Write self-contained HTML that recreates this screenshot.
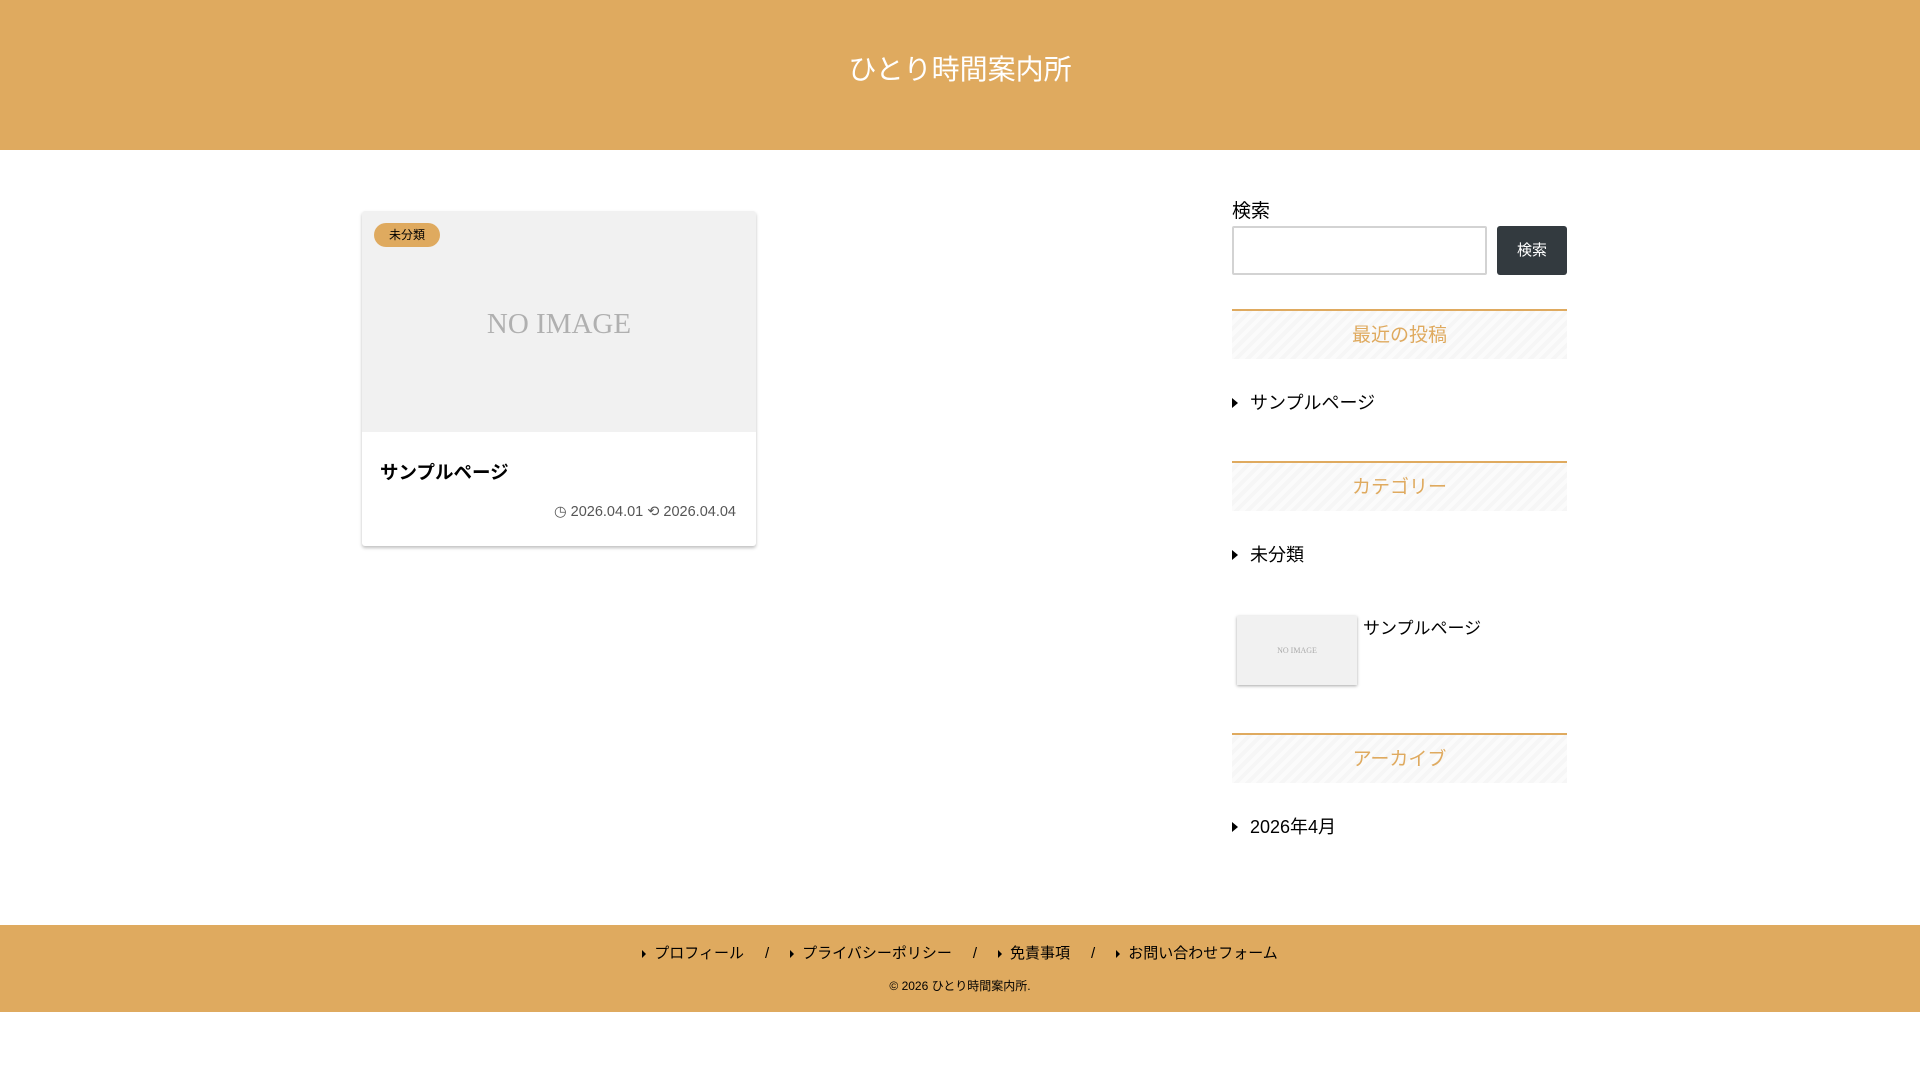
<!DOCTYPE html>
<html><head><meta charset="utf-8"><style>
*{box-sizing:border-box;margin:0;padding:0}
body{width:1920px;height:1080px;background:#fff;font-family:"Liberation Sans","Noto Sans CJK JP",sans-serif;color:#000;position:relative;overflow:hidden}
.hd{position:absolute;left:0;top:0;width:1920px;height:150px;background:#dfaa5f;color:#fff;font-size:28px;text-align:center;line-height:140px}
.card{position:absolute;left:362px;top:211px;width:394px;height:335px;background:#fff;box-shadow:0 2px 3px rgba(0,0,0,.25);border-radius:3px;overflow:hidden}
.img{height:221px;background:#f1f1f1;text-align:center;line-height:226px;font-family:"Liberation Serif",serif;font-size:29px;color:#b0b0b0}
.badge{position:absolute;left:12px;top:12px;width:66px;height:24px;border-radius:12px;background:#dfaa5f;font-size:12px;text-align:center;line-height:24px}
.ttl{position:absolute;left:18px;top:248px;font-size:18.5px;font-weight:bold}
.dt{position:absolute;right:20px;top:293px;font-size:14.5px;color:#555}
.side{position:absolute;left:1232px;top:0;width:335px}
.lab{position:absolute;top:196px;font-size:19px}
.inp{position:absolute;top:226px;left:0;width:255px;height:49px;border:2px solid #d3d3d3;border-radius:2px}
.btn{position:absolute;top:226px;left:265px;width:70px;height:49px;background:#333a3f;color:#fff;border-radius:3px;font-size:15px;text-align:center;line-height:49px}
.wh{position:absolute;left:0;width:335px;height:50px;border-top:2px solid #dfaa5f;background:repeating-linear-gradient(-45deg,#f6f6f6 0 4px,#fbfbfb 4px 8px);color:#dfaa5f;font-size:19px;text-align:center;line-height:50px}
.li{position:absolute;left:0;font-size:18px}
.li:before{content:"";display:inline-block;border-left:6px solid #000;border-top:5px solid transparent;border-bottom:5px solid transparent;margin-right:12px;vertical-align:1px}
.th{position:absolute;left:5px;top:616px;width:120px;height:69px;background:#f1f1f1;box-shadow:0 1px 3px rgba(0,0,0,.35);font-family:"Liberation Serif",serif;font-size:8px;color:#aaa;text-align:center;line-height:69px}
.ft{position:absolute;left:0;top:925px;width:1920px;height:87px;background:#dfaa5f}
.fl{position:absolute;top:17px;width:1920px;text-align:center;font-size:15px}
.fl span{margin:0 21px}
.fl i{font-style:normal}
.fl i:before{content:"";display:inline-block;border-left:4px solid #000;border-top:4px solid transparent;border-bottom:4px solid transparent;margin-right:8px}
.cp{position:absolute;top:52px;width:1920px;text-align:center;font-size:12px}
</style></head><body>
<div class="hd">ひとり時間案内所</div>
<div class="card"><div class="img">NO IMAGE</div><div class="badge">未分類</div>
<div class="ttl">サンプルページ</div>
<div class="dt">◷ 2026.04.01 ⟲ 2026.04.04</div></div>
<div class="side">
<div class="lab">検索</div><div class="inp"></div><div class="btn">検索</div>
<div class="wh" style="top:309px">最近の投稿</div>
<div class="li" style="top:389px">サンプルページ</div>
<div class="wh" style="top:461px">カテゴリー</div>
<div class="li" style="top:541px">未分類</div>
<div class="th">NO IMAGE</div>
<div style="position:absolute;left:131px;top:614px;font-size:17px">サンプルページ</div>
<div class="wh" style="top:733px">アーカイブ</div>
<div class="li" style="top:813px">2026年4月</div>
</div>
<div class="ft"><div class="fl"><i>プロフィール</i><span>/</span><i>プライバシーポリシー</i><span>/</span><i>免責事項</i><span>/</span><i>お問い合わせフォーム</i></div>
<div class="cp">© 2026 ひとり時間案内所.</div></div>
</body></html>
